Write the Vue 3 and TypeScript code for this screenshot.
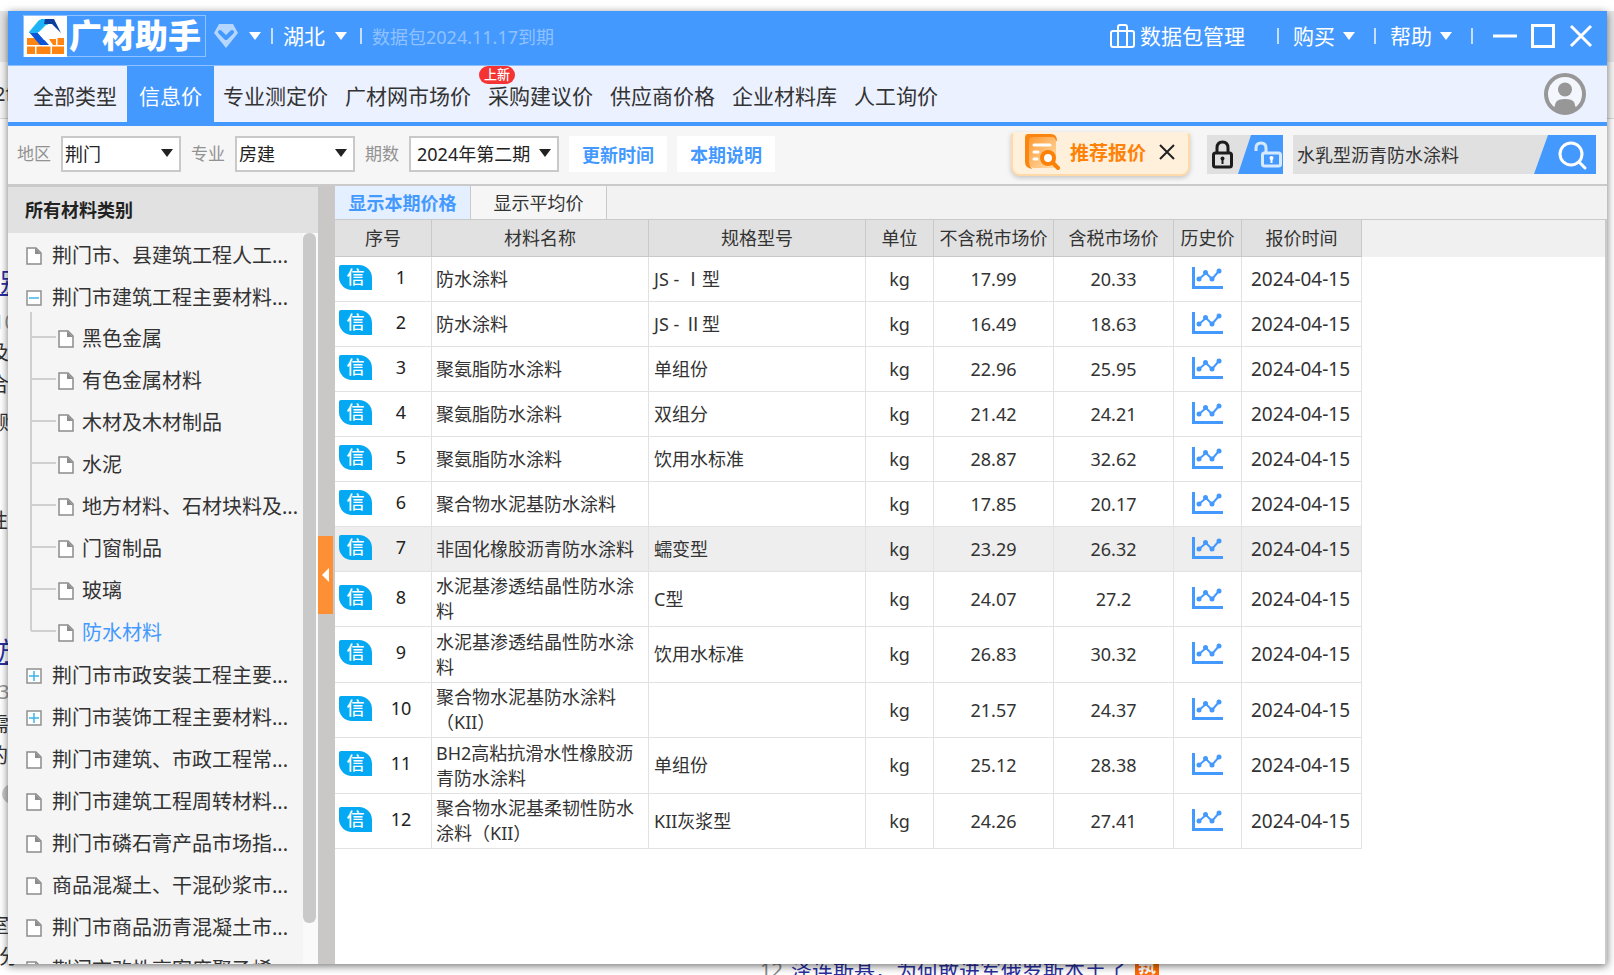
<script setup lang="ts">
import { ref } from 'vue'

interface Category { label: string; kind: 'doc' | 'plus' | 'minus'; children?: string[] }
interface Material { name: string; spec: string; grade?: string; net: string; gross: string }
interface Fragment { text: string; left: number; top: number; tone: 'link' | 'dim' | 'ink' }

const menu = ['全部类型', '信息价', '专业测定价', '广材网市场价', '采购建议价', '供应商价格', '企业材料库', '人工询价']
const activeMenu = ref('信息价')
const activeTab = ref('current')
const activeCategory = ref('防水材料')
const keyword = ref('水乳型沥青防水涂料')
const selectedRow = ref(6)

const filters = [
  { id: 'region', label: '地区', options: ['荆门', '武汉', '宜昌'], wide: false },
  { id: 'major', label: '专业', options: ['房建', '市政'], wide: false },
  { id: 'period', label: '期数', options: ['2024年第二期', '2024年第一期'], wide: true },
]

const categories: Category[] = [
  { label: '荆门市、县建筑工程人工...', kind: 'doc' },
  {
    label: '荆门市建筑工程主要材料...', kind: 'minus',
    children: ['黑色金属', '有色金属材料', '木材及木材制品', '水泥', '地方材料、石材块料及...', '门窗制品', '玻璃', '防水材料'],
  },
  { label: '荆门市市政安装工程主要...', kind: 'plus' },
  { label: '荆门市装饰工程主要材料...', kind: 'plus' },
  { label: '荆门市建筑、市政工程常...', kind: 'doc' },
  { label: '荆门市建筑工程周转材料...', kind: 'doc' },
  { label: '荆门市磷石膏产品市场指...', kind: 'doc' },
  { label: '商品混凝土、干混砂浆市...', kind: 'doc' },
  { label: '荆门市商品沥青混凝土市...', kind: 'doc' },
  { label: '荆门市改性高密度聚乙烯...', kind: 'doc' },
]

const materials: Material[] = [
  { name: '防水涂料', spec: 'JS - ', grade: 'Ⅰ型', net: '17.99', gross: '20.33' },
  { name: '防水涂料', spec: 'JS - ', grade: 'Ⅱ型', net: '16.49', gross: '18.63' },
  { name: '聚氨脂防水涂料', spec: '单组份', net: '22.96', gross: '25.95' },
  { name: '聚氨脂防水涂料', spec: '双组分', net: '21.42', gross: '24.21' },
  { name: '聚氨脂防水涂料', spec: '饮用水标准', net: '28.87', gross: '32.62' },
  { name: '聚合物水泥基防水涂料', spec: '', net: '17.85', gross: '20.17' },
  { name: '非固化橡胶沥青防水涂料', spec: '蠕变型', net: '23.29', gross: '26.32' },
  { name: '水泥基渗透结晶性防水涂料', spec: 'C型', net: '24.07', gross: '27.2' },
  { name: '水泥基渗透结晶性防水涂料', spec: '饮用水标准', net: '26.83', gross: '30.32' },
  { name: '聚合物水泥基防水涂料（KII）', spec: '', net: '21.57', gross: '24.37' },
  { name: 'BH2高粘抗滑水性橡胶沥青防水涂料', spec: '单组份', net: '25.12', gross: '28.38' },
  { name: '聚合物水泥基柔韧性防水涂料（KII）', spec: 'KII灰浆型', net: '24.26', gross: '27.41' },
]

const fragments: Fragment[] = [
  { text: '2f', left: -6, top: 80, tone: 'ink' },
  { text: '别', left: 0, top: 268, tone: 'link' },
  { text: '10', left: -7, top: 308, tone: 'dim' },
  { text: '及', left: -11, top: 339, tone: 'ink' },
  { text: '合', left: -11, top: 371, tone: 'ink' },
  { text: '购', left: -1, top: 409, tone: 'ink' },
  { text: '性', left: -12, top: 507, tone: 'ink' },
  { text: '访', left: -11, top: 637, tone: 'link' },
  { text: '3', left: -2, top: 678, tone: 'dim' },
  { text: '需', left: -11, top: 711, tone: 'ink' },
  { text: '的', left: -12, top: 742, tone: 'ink' },
  { text: '室', left: -11, top: 912, tone: 'ink' },
  { text: '分', left: -1, top: 943, tone: 'ink' },
]
</script>

<template>
  <div class="desktop">
    <div class="backdrop" aria-hidden="true">
      <span v-for="f in fragments" :key="f.top" :class="['fragment', f.tone]" :style="{ left: f.left + 'px', top: f.top + 'px' }">{{ f.text }}</span>
      <i class="dot"></i>
      <p class="headline"><span>12</span><a href="#">泽连斯基，为何敢进军俄罗斯本土了</a><b>热</b></p>
    </div>

    <div class="window">
      <header class="titlebar">
        <div class="logo">
          <svg width="43" height="41" viewBox="0 0 43 41">
            <path d="M0 0h43v41H0z" fill="#fff" />
            <path d="M3 22h14v7H3zM3 30.500h8V38H3zM12.500 30.500h14V38h-14zM28 30.500h12V38H28zM29 29l-4-6h7v6zM33.500 22H40v7h-6.500z" fill="#ff8412" />
            <path d="M5 16 15 4h12l-9 12z" fill="#22c1f5" />
            <path d="M5 16h8l12 13h-9z" fill="#0d55d8" />
            <path d="M17 3h12l-4 5h-4l-8 9H5z" fill="#1eb2f7" />
            <path d="M21 3h9l7 14-9-9h-8z" fill="#0b3f9e" />
            <path d="M14 17l8-8h4l7 8h-6l6 4H22l-2 3z" fill="#fff" />
          </svg>
          <strong>广材助手</strong>
        </div>
        <button class="gem" aria-label="会员">
          <svg width="24" height="24" viewBox="0 0 24 24"><path d="M5 0h14l5 9-12 15L0 9z" fill="#b5d6ff" /><path d="m6 8 6 6 6-6" fill="none" stroke="#4499ff" stroke-width="4" stroke-linecap="round" stroke-linejoin="round" /></svg>
          <svg class="caret" width="12" height="8" viewBox="0 0 12 8"><path d="M0 0h12L6 8z" fill="currentColor" /></svg>
        </button>
        <i class="sep"></i>
        <button class="bar-button province">湖北<svg class="caret" width="12" height="8" viewBox="0 0 12 8"><path d="M0 0h12L6 8z" fill="currentColor" /></svg></button>
        <i class="sep"></i>
        <span class="expiry">数据包2024.11.17到期</span>
        <div class="spacer"></div>
        <button class="bar-button manage">
          <svg width="25" height="24" viewBox="0 0 25 24" fill="none" stroke="currentColor" stroke-width="2"><rect x="1" y="7" width="23" height="16" rx="2" /><path d="M8 23V3q0-2 2-2h5q2 0 2 2v20" /></svg>
          数据包管理
        </button>
        <i class="sep"></i>
        <button class="bar-button">购买<svg class="caret" width="12" height="8" viewBox="0 0 12 8"><path d="M0 0h12L6 8z" fill="currentColor" /></svg></button>
        <i class="sep"></i>
        <button class="bar-button">帮助<svg class="caret" width="12" height="8" viewBox="0 0 12 8"><path d="M0 0h12L6 8z" fill="currentColor" /></svg></button>
        <i class="sep"></i>
        <div class="controls">
          <button aria-label="最小化"><svg width="24" height="24" viewBox="0 0 24 24"><path d="M0 12h24" stroke="#fff" stroke-width="3" /></svg></button>
          <button aria-label="最大化"><svg width="24" height="24" viewBox="0 0 24 24"><rect x="1.500" y="1.500" width="21" height="21" fill="none" stroke="#fff" stroke-width="3" /></svg></button>
          <button aria-label="关闭"><svg width="24" height="24" viewBox="0 0 24 24"><path d="m2 2 20 20M22 2 2 22" stroke="#fff" stroke-width="3" /></svg></button>
        </div>
      </header>

      <nav class="menu">
        <button v-for="m in menu" :key="m" :class="{ active: m === activeMenu }" @click="activeMenu = m">
          {{ m }}<em v-if="m === '采购建议价'">上新</em>
        </button>
        <button class="avatar" aria-label="用户">
          <svg width="42" height="42" viewBox="0 0 42 42"><circle cx="21" cy="21" r="19" fill="#f4f6fd" stroke="#979797" stroke-width="4" /><circle cx="21" cy="16.500" r="7" fill="#979797" /><path d="M8 36c3-1 3-5 4-7q2-3 9-3t9 3c1 2 1 6 4 7q-5 5-13 5T8 36z" fill="#979797" /></svg>
        </button>
      </nav>

      <form class="toolbar" @submit.prevent>
        <template v-for="f in filters" :key="f.id">
          <label :for="f.id">{{ f.label }}</label>
          <div :class="['select', { wide: f.wide }]">
            <select :id="f.id"><option v-for="o in f.options" :key="o">{{ o }}</option></select>
            <svg width="12" height="8" viewBox="0 0 12 8"><path d="M0 0h12L6 8z" fill="#222" /></svg>
          </div>
        </template>
        <button type="button" class="flat">更新时间</button>
        <button type="button" class="flat">本期说明</button>
        <div class="spacer"></div>
        <div class="promo">
          <button type="button" class="promo-main">
            <svg width="36" height="36" viewBox="0 0 36 36">
              <defs><linearGradient id="sheet" x1="0" y1="0" x2="1" y2="1"><stop offset="0" stop-color="#ff9a33" /><stop offset="1" stop-color="#ffe0b0" /></linearGradient></defs>
              <path d="M3 0h23q6 0 6 7H5v22q0 6 4 6-9 0-9-7V4q0-4 3-4z" fill="#fb860f" />
              <path d="M8 3h18q5 0 5 5v26H10q-6 0-6-6V7q0-4 4-4z" fill="url(#sheet)" />
              <path d="M9 11h16M9 18h4M9 25h3" stroke="#fff" stroke-width="3" stroke-linecap="round" />
              <circle cx="23" cy="24" r="6" fill="#fff" stroke="#fb8208" stroke-width="4" /><path d="m28 29 5 5" stroke="#fb8208" stroke-width="4" stroke-linecap="round" />
            </svg>
            推荐报价
          </button>
          <button type="button" aria-label="关闭推荐"><svg width="16" height="16" viewBox="0 0 16 16"><path d="m1 1 14 14M15 1 1 15" stroke="#222" stroke-width="2" /></svg></button>
        </div>
        <button type="button" class="lock" aria-label="锁定">
          <svg width="76" height="39" viewBox="0 0 76 39">
            <path d="M0 0h76v39H0z" fill="#e0e0e0" /><path d="M44 0h32v39H31z" fill="#4499ff" />
            <g fill="none" stroke="#1c1c1c" stroke-width="3"><rect x="6.500" y="18" width="18" height="14" rx="2" /><path d="M10 18v-5q0-6 5.500-6t5.500 6v5" /></g>
            <circle cx="15.500" cy="23.500" r="2" fill="#1c1c1c" /><path d="M14.500 24h2v5h-2z" fill="#1c1c1c" />
            <g fill="none" stroke="#d5e9ff" stroke-width="3"><rect x="55.500" y="18" width="18" height="13" rx="2" /><path d="M49 16v-3q0-5 5-5t5 5v5" /></g>
            <circle cx="64.500" cy="23" r="2" fill="#fff" /><path d="M63.500 23h2v5h-2z" fill="#fff" />
          </svg>
        </button>
        <div class="search">
          <input v-model="keyword" type="text" aria-label="搜索材料">
          <button aria-label="搜索">
            <svg width="62" height="39" viewBox="0 0 62 39"><path d="M14 0h48v39H0z" fill="#4499ff" /><circle cx="37" cy="19" r="11" fill="none" stroke="#fff" stroke-width="3" /><path d="m45 27 6 6" stroke="#fff" stroke-width="3" stroke-linecap="round" /></svg>
          </button>
        </div>
      </form>

      <div class="body">
        <aside class="sidebar">
          <h2>所有材料类别</h2>
          <div class="tree-wrap">
            <ul class="tree">
              <li v-for="c in categories" :key="c.label">
                <button class="node">
                  <svg v-if="c.kind === 'doc'" width="16" height="18" viewBox="0 0 16 18"><path d="M1 1h9l5 5v11H1z" fill="#fff" stroke="#8c8c8c" stroke-width="1.500" /><path d="M9 1v6h6z" fill="#8c8c8c" /></svg>
                  <svg v-else width="16" height="16" viewBox="0 0 16 16"><path d="M1 1h14v14H1z" fill="#fff" stroke="#909090" stroke-width="1.500" /><path :d="c.kind === 'plus' ? 'M3 8h10M8 3v10' : 'M3 8h10'" stroke="#3cb4e8" stroke-width="1.500" /></svg>
                  <span>{{ c.label }}</span>
                </button>
                <ul v-if="c.children">
                  <li v-for="(k, i) in c.children" :key="k" class="child">
                    <svg class="branch" width="26" height="42" viewBox="0 0 26 42"><path :d="`M1 ${i === 0 ? -7 : 0}V${i === c.children.length - 1 ? 18 : 42}M1 18h25`" fill="none" stroke="#d0d0d0" stroke-width="2" /></svg>
                    <button :class="['node', { active: k === activeCategory }]" @click="activeCategory = k">
                      <svg width="16" height="18" viewBox="0 0 16 18"><path d="M1 1h9l5 5v11H1z" fill="#fff" stroke="#8c8c8c" stroke-width="1.500" /><path d="M9 1v6h6z" fill="#8c8c8c" /></svg>
                      <span>{{ k }}</span>
                    </button>
                  </li>
                </ul>
              </li>
            </ul>
            <div class="track"><div class="thumb"></div></div>
          </div>
        </aside>

        <div class="splitter">
          <button aria-label="收起"><svg width="7" height="14" viewBox="0 0 7 14"><path d="M7 0v14L0 7z" fill="#fff" /></svg></button>
        </div>

        <main class="content">
          <div class="tabs">
            <button :class="{ active: activeTab === 'current' }" @click="activeTab = 'current'">显示本期价格</button>
            <button :class="{ active: activeTab === 'average' }" @click="activeTab = 'average'">显示平均价</button>
          </div>
          <div class="grid">
            <table>
              <colgroup><col class="c-index"><col class="c-text"><col class="c-text"><col class="c-small"><col class="c-num"><col class="c-num"><col class="c-small"><col class="c-num"></colgroup>
              <thead>
                <tr><th>序号</th><th>材料名称</th><th>规格型号</th><th>单位</th><th>不含税市场价</th><th>含税市场价</th><th>历史价</th><th>报价时间</th></tr>
              </thead>
              <tbody>
                <tr v-for="(m, i) in materials" :key="i" :class="{ selected: i === selectedRow, tall: i > 6 }" @click="selectedRow = i">
                  <td><div class="index"><span class="tag">信</span><span class="no">{{ i + 1 }}</span></div></td>
                  <td class="text">{{ m.name }}</td>
                  <td class="text spec">{{ m.spec }}<span v-if="m.grade" class="grade">{{ m.grade }}</span></td>
                  <td>kg</td>
                  <td>{{ m.net }}</td>
                  <td>{{ m.gross }}</td>
                  <td>
                    <button class="chart" aria-label="查看历史价">
                      <svg width="31" height="22" viewBox="0 0 31 22" fill="none" stroke="#4499ff"><path d="M1.500 0v20.500H31" stroke-width="3" /><path d="m7 12 7-6 6 6 7-8" stroke-width="2" /><g fill="#4499ff" stroke="none"><circle cx="7" cy="12" r="2.500" /><circle cx="13.500" cy="5.500" r="2.500" /><circle cx="20" cy="12" r="2.500" /><circle cx="27" cy="4" r="2.500" /></g></svg>
                    </button>
                  </td>
                  <td class="date">2024-04-15</td>
                </tr>
              </tbody>
            </table>
          </div>
        </main>
      </div>
    </div>
  </div>
</template>

<style>
body { margin: 0; background: #fff; }
</style>

<style scoped>
* { box-sizing: border-box; }
.desktop { position: relative; height: 100vh; padding: 11px 7px 11px 8px; overflow: hidden; font-family: "Noto Sans", "Noto Sans CJK SC", sans-serif; font-size: 18px; color: #333; }
button { margin: 0; padding: 0; border: 0; background: none; font: inherit; color: inherit; cursor: pointer; }
svg { display: block; flex: none; }
ul { list-style: none; margin: 0; padding: 0; }
.spacer { flex: 1; }

.backdrop { position: absolute; inset: 11px 0 0; background: linear-gradient(#e4e4e4 51px, #f6f6f6 51px, #f6f6f6 107px, #d8d8d8 107px, #d8d8d8 108px, #fff 108px); }
.fragment { position: absolute; margin-top: -11px; font-size: 20px; line-height: 28px; white-space: nowrap; }
.ink { color: #333; }
.dim { color: #999; }
.link { color: #2a2f9f; font-size: 26px; text-decoration: underline; }
.dot { position: absolute; left: 2px; top: 773px; width: 20px; height: 20px; border-radius: 50%; background: #c8c8c8; }
.headline { position: absolute; left: 760px; bottom: -9px; margin: 0; display: flex; align-items: center; gap: 8px; font-size: 20px; line-height: 28px; color: #888; }
.headline a { color: #2a2f9f; font-size: 21px; text-decoration: none; white-space: nowrap; }
.headline b { width: 24px; line-height: 24px; text-align: center; font-size: 18px; color: #fff; background: #ff6a00; }

.window { position: relative; height: 100%; display: flex; flex-direction: column; background: #fff; box-shadow: 0 2px 8px rgba(0, 0, 0, .55); overflow: hidden; }

.titlebar { flex: none; height: 54px; padding: 0 14px 4px 15px; display: flex; align-items: center; background: #4499ff; color: #fff; font-size: 21px; }
.logo { display: flex; align-items: center; height: 42px; padding-right: 4px; border: 1px solid #8fc1ff; }
.logo strong { margin-left: 2px; font-size: 33px; line-height: 40px; font-weight: 900; }
.gem { display: flex; align-items: center; gap: 11px; margin-left: 8px; }
.sep { width: 2px; height: 16px; margin: 0 10px; background: #c5dfff; }
.bar-button { display: flex; align-items: center; gap: 8px; line-height: 30px; white-space: nowrap; }
.province { gap: 10px; margin-right: 3px; }
.expiry { font-size: 18px; color: #8fc1ff; }
.manage { margin-right: 22px; }
.manage svg { margin-right: -3px; }
.manage ~ .sep { margin: 0 14px 0 10px; }
.manage ~ .bar-button { margin-right: 9px; }
.controls { display: flex; gap: 14px; margin-left: 6px; }

.menu { flex: none; position: relative; height: 61px; display: flex; align-items: stretch; gap: 17px; background: #ebf1ff; border-top: 1px solid #8fc1ff; border-bottom: 4px solid #4499ff; font-size: 21px; }
.menu button { position: relative; padding-top: 4px; line-height: 52px; white-space: nowrap; color: #333; }
.menu button:first-child { padding: 4px 10px 0 25px; margin-right: -17px; }
.menu button.active { padding: 4px 12px 0; margin-right: -8px; background: #4499ff; color: #fff; }
.menu em { position: absolute; left: -9px; top: 0; width: 36px; height: 18px; border-radius: 9px; background: #f53333; color: #fff; font-size: 13px; line-height: 17px; font-style: normal; font-weight: 500; text-align: center; }
.menu button.avatar { margin-left: auto; margin-right: 21px; padding: 0; display: flex; align-items: center; }

.toolbar { flex: none; height: 60px; padding: 0 11px 2px 9px; display: flex; align-items: center; background: #f6f6f6; border-bottom: 2px solid #cacaca; }
.toolbar label { width: 44px; font-size: 17px; line-height: 24px; color: #929292; white-space: nowrap; }
.select { position: relative; width: 120px; height: 36px; margin-right: 10px; }
.select.wide { width: 150px; margin-right: 0; }
.select select { width: 100%; height: 100%; padding: 0 2px; border: 2px solid #c9c9c9; border-radius: 0; background: #fff; appearance: none; font: inherit; color: #222; outline: 0; }
.select.wide select { padding-left: 6px; }
.select svg { position: absolute; right: 8px; top: 13px; pointer-events: none; }
.flat { width: 98px; height: 36px; margin-left: 10px; background: #fff; color: #4499ff; font-weight: 700; white-space: nowrap; }
.promo { display: flex; align-items: center; gap: 13px; height: 44px; padding: 0 13px 4px 12px; margin-right: 17px; background: #fff0dc; border: 2px solid #ffd9a8; border-top-color: #fff0dc; border-radius: 4px 4px 9px 9px; box-shadow: 0 2px 5px rgba(0, 0, 0, .2); }
.promo-main { display: flex; align-items: center; gap: 9px; font-size: 19px; font-weight: 700; color: #ff8208; white-space: nowrap; }
.search { display: flex; width: 303px; height: 39px; margin-left: 10px; background: #e0e0e0; }
.search input { flex: 1; min-width: 0; padding: 0 4px; border: 0; outline: 0; background: none; font: inherit; color: #333; }

.body { flex: 1; min-height: 0; display: flex; }
.sidebar { flex: none; width: 310px; display: flex; flex-direction: column; background: #f5f5f5; border-top: 1px solid #cacaca; }
.sidebar h2 { flex: none; margin: 0; padding-left: 17px; height: 46px; font-size: 18px; line-height: 46px; font-weight: 700; color: #222; background: #e1e1e1; }
.tree-wrap { flex: 1; min-height: 0; display: flex; justify-content: space-between; overflow: hidden; }
.tree { padding: 2px 0 0 18px; }
.node { display: flex; align-items: center; gap: 10px; height: 42px; font-size: 20px; line-height: 30px; color: #333; white-space: nowrap; }
.node.active { color: #4499ff; }
.child { display: flex; padding-left: 4px; }
.child .node { gap: 8px; margin-left: 2px; padding-bottom: 2px; }
.branch { overflow: visible; }
.track { flex: none; width: 15px; padding-right: 2px; background: #fafafa; }
.thumb { height: calc(100% - 41px); border-radius: 6px; background: #c9c9c9; }
.splitter { flex: none; width: 17px; display: flex; align-items: center; background: #c9c8c7; }
.splitter button { width: 15px; height: 78px; display: flex; align-items: center; justify-content: center; background: #fd9035; }

.content { flex: 1; min-width: 0; display: flex; flex-direction: column; background: #fff; }
.tabs { flex: none; height: 34px; display: flex; background: #f2f2f2; border-bottom: 1px solid #cacaca; }
.tabs button { width: 136px; border-right: 1px solid #cacaca; background: #f6f6f6; line-height: 32px; white-space: nowrap; }
.tabs .active { background: #e4efff; color: #4499ff; font-weight: 700; }
.grid { flex: 1; min-height: 0; overflow: hidden; border-right: 2px solid #cacaca; background: linear-gradient(#f0f0f0 37px, #fff 37px); }
table { width: 1027px; table-layout: fixed; border-collapse: separate; border-spacing: 0; background: #fff; }
.c-index { width: 97px; }
.c-text { width: 217px; }
.c-small { width: 68px; }
.c-num { width: 120px; }
th { height: 37px; padding: 0; border-right: 1px solid #c9c9c9; border-bottom: 1px solid #c9c9c9; background: #e1e1e1; font-weight: 400; line-height: 24px; white-space: nowrap; }
td { height: 45px; padding: 0; border-right: 1px solid #e2e2e2; border-bottom: 1px solid #e2e2e2; text-align: center; line-height: 25px; }
.tall td { height: 55px; }
.tall:nth-child(odd) td { height: 56px; }
.selected td { background: #eee; }
.text { padding: 0 5px 0 4px; text-align: left; }
.spec { padding-left: 5px; }
.grade { font-family: "Noto Sans CJK SC", sans-serif; line-height: 20px; }
.date { padding-right: 2px; font-size: 19px; }
.index { display: flex; align-items: center; padding: 0 0 4px 4px; color: #222; }
.tag { width: 33px; height: 25px; border-radius: 2px 13px 0 13px; background: #05a8f2; color: #fff; font-size: 18px; line-height: 25px; font-weight: 500; }
.no { width: 58px; }
.chart { display: flex; margin: 0 auto; padding-bottom: 3px; }
</style>
